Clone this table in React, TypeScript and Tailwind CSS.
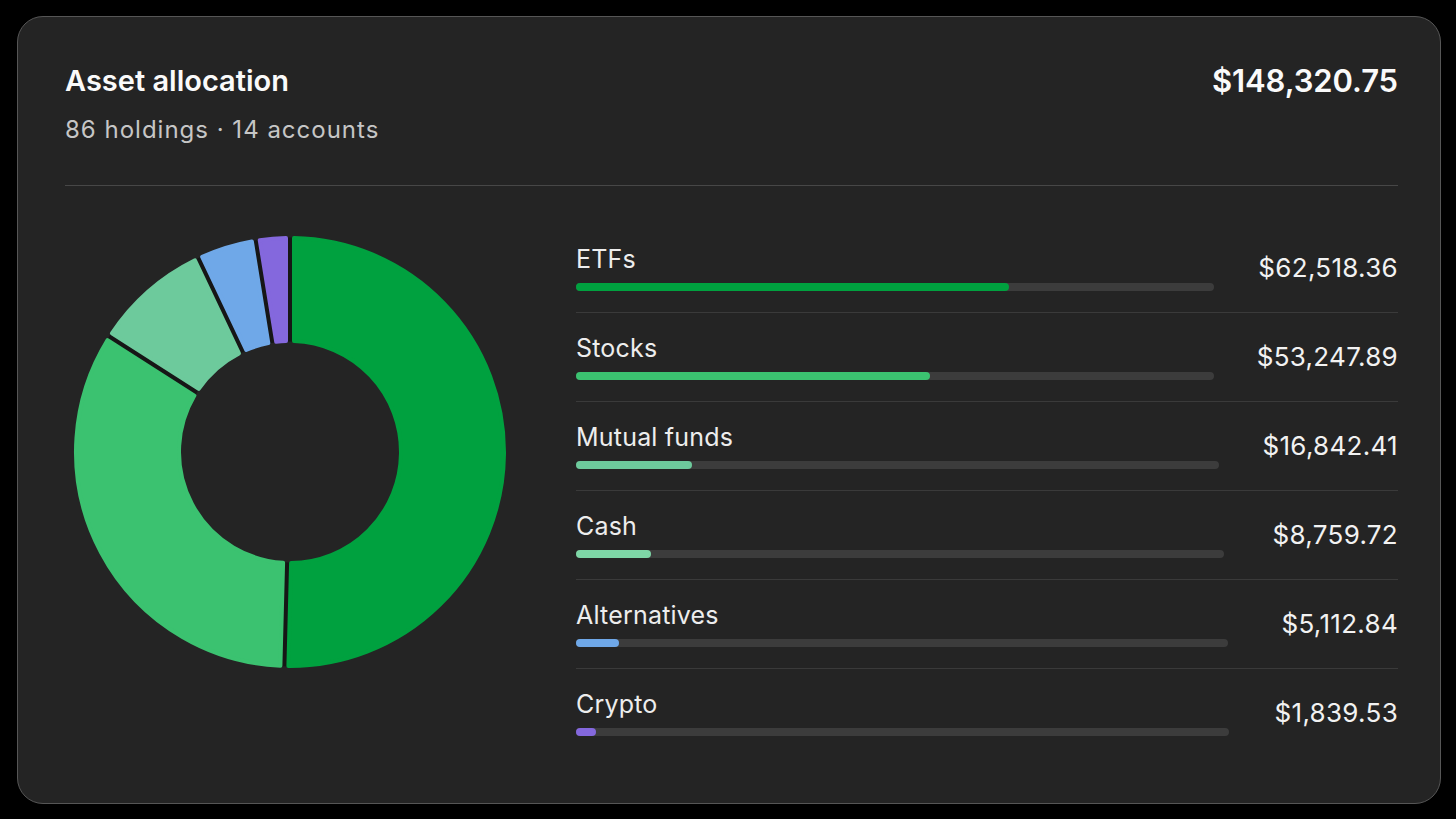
import React from "react";

type Seg = { a0: number; a1: number; color: string };

const segs: Seg[] = [
  { a0: 0, a1: 181.5, color: "#00a13f" },
  { a0: 181.5, a1: 302.6, color: "#3bc270" },
  { a0: 302.6, a1: 334.7, color: "#6dca9c" },
  { a0: 334.7, a1: 350.8, color: "#6fa8e8" },
  { a0: 350.8, a1: 360, color: "#8468dd" },
];

const C = 218;

function pt(angDeg: number, rad: number, offRad: number) {
  const a = (angDeg * Math.PI) / 180 + offRad;
  return [C + rad * Math.sin(a), C - rad * Math.cos(a)];
}

function arcPath(a0: number, a1: number, R: number, r: number, gap: number) {
  const po = gap / 2 / R;
  const pi = gap / 2 / r;
  const span = ((a1 - a0) * Math.PI) / 180;
  const largeO = span - 2 * po > Math.PI ? 1 : 0;
  const largeI = span - 2 * pi > Math.PI ? 1 : 0;
  const [ox0, oy0] = pt(a0, R, po);
  const [ox1, oy1] = pt(a1, R, -po);
  const [ix1, iy1] = pt(a1, r, -pi);
  const [ix0, iy0] = pt(a0, r, pi);
  return `M ${ox0} ${oy0} A ${R} ${R} 0 ${largeO} 1 ${ox1} ${oy1} L ${ix1} ${iy1} A ${r} ${r} 0 ${largeI} 0 ${ix0} ${iy0} Z`;
}

function Donut() {
  return (
    <svg width="436" height="436" viewBox="0 0 436 436">
      <circle cx={C} cy={C} r={162.5} fill="none" stroke="#161616" strokeWidth={104} />
      {segs.map((s, i) => (
        <path
          key={i}
          d={arcPath(s.a0, s.a1, 214, 111, 8)}
          fill={s.color}
          stroke={s.color}
          strokeWidth={4}
          strokeLinejoin="round"
        />
      ))}
    </svg>
  );
}

type Row = {
  label: string;
  value: string;
  track: string;
  fill: string;
  color: string;
};

const rows: Row[] = [
  { label: "ETFs", value: "$62,518.36", track: "w-[638px]", fill: "w-[433px]", color: "bg-[#00a13f]" },
  { label: "Stocks", value: "$53,247.89", track: "w-[638px]", fill: "w-[354px]", color: "bg-[#3bc270]" },
  { label: "Mutual funds", value: "$16,842.41", track: "w-[643px]", fill: "w-[116px]", color: "bg-[#6dca9c]" },
  { label: "Cash", value: "$8,759.72", track: "w-[648px]", fill: "w-[75px]", color: "bg-[#7ed6a6]" },
  { label: "Alternatives", value: "$5,112.84", track: "w-[652px]", fill: "w-[43px]", color: "bg-[#6fa8e8]" },
  { label: "Crypto", value: "$1,839.53", track: "w-[653px]", fill: "w-[20px]", color: "bg-[#8468dd]" },
];

export default function App() {
  return (
    <div
      className="w-[1456px] h-[819px] bg-black overflow-hidden pt-[16px] pl-[17px]"
      style={{ fontFamily: "Inter, 'Noto Sans', sans-serif" }}
    >
      <div className="w-[1424px] h-[788px] rounded-[26px] border border-[#565656] bg-[#242424] pt-[46px] pl-[47px] pr-[42px]">
        <div className="flex items-start justify-between">
          <div className="text-[29px] leading-[36px] font-semibold tracking-[0px] text-[#fafafa]">
            Asset allocation
          </div>
          <div className="text-[31px] leading-[36px] font-semibold tracking-[-0.1px] text-[#fafafa]">
            $148,320.75
          </div>
        </div>
        <div className="mt-[17px] text-[24px] leading-[28px] tracking-[1px] text-[#c6c6c6]">
          86 holdings · 14 accounts
        </div>
        <div className="mt-[41px] h-px bg-[#474747]" />
        <div className="flex items-start">
          <div className="mt-[48px] ml-[7px]">
            <Donut />
          </div>
          <div className="ml-[68px] mt-[38px] flex-1 flex flex-col">
            {rows.map((r, i) => (
              <div
                key={r.label}
                className={
                  i < rows.length - 1
                    ? "h-[89px] flex items-center justify-between border-b border-[#3a3a3a]"
                    : "h-[89px] flex items-center justify-between"
                }
              >
                <div className="self-start pt-[20px]">
                  <div className="text-[25px] leading-[30px] text-[#ededed] tracking-[0.2px]">{r.label}</div>
                  <div className={`mt-[9px] h-[8px] rounded-full bg-[#3c3c3c] ${r.track}`}>
                    <div className={`h-[8px] rounded-full ${r.fill} ${r.color}`} />
                  </div>
                </div>
                <div className="text-[26px] leading-[30px] text-[#f2f2f2] tracking-[0.3px] pb-px">{r.value}</div>
              </div>
            ))}
          </div>
        </div>
      </div>
    </div>
  );
}
